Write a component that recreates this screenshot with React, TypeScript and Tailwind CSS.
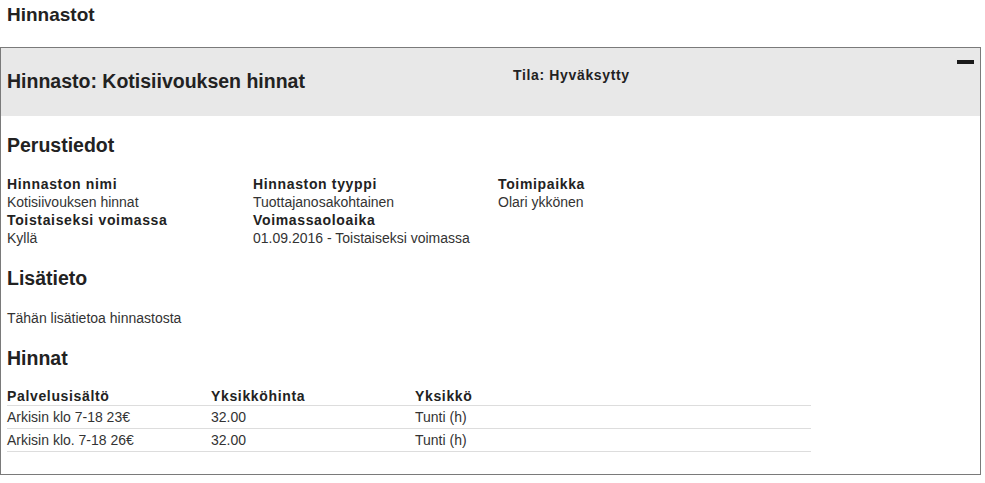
export default function App() {
  const font = { fontFamily: '"Liberation Sans", Arial, sans-serif' };
  const fields = [
    ["Hinnaston nimi", "Kotisiivouksen hinnat"],
    ["Hinnaston tyyppi", "Tuottajanosakohtainen"],
    ["Toimipaikka", "Olari ykkönen"],
    ["Toistaiseksi voimassa", "Kyllä"],
    ["Voimassaoloaika", "01.09.2016 - Toistaiseksi voimassa"],
  ];
  const rows = [
    ["Arkisin klo 7-18 23€", "32.00", "Tunti (h)"],
    ["Arkisin klo. 7-18 26€", "32.00", "Tunti (h)"],
  ];
  return (
    <div style={font} className="w-[985px] h-[483px] bg-white text-[#222] overflow-hidden">
      <h1 className="px-[7px] h-[30px] leading-[30px] text-[19px] font-bold">Hinnastot</h1>
      <div className="mt-[17px] w-[981px] h-[428px] border border-[#7a7a7a]">
        <div className="relative h-[68px] bg-[#e8e8e8] flex">
          <h2 className="pl-[6px] pt-[19px] w-[512px] text-[19.5px] leading-[28px] font-bold">
            Hinnasto: Kotisiivouksen hinnat
          </h2>
          <div className="pt-[18px] text-[14px] leading-[18px] font-bold tracking-[0.65px]">Tila: Hyväksytty</div>
          <div className="absolute left-[956px] top-[12px] w-[17px] h-[4px] bg-[#1a1a1a]" />
        </div>
        <div className="px-[6px]">
          <h3 className="mt-[15px] text-[19.5px] leading-[28px] font-bold">Perustiedot</h3>
          <div className="mt-[16px] grid grid-cols-[246px_245px_245px] text-[14px] leading-[18px]">
            {fields.map(([l, v]) => (
              <div key={l}>
                <div className="font-bold tracking-[0.65px]">{l}</div>
                <div className="text-[#333]">{v}</div>
              </div>
            ))}
          </div>
          <h3 className="mt-[17px] text-[19.5px] leading-[28px] font-bold">Lisätieto</h3>
          <p className="mt-[17px] text-[14px] leading-[18px] text-[#333]">Tähän lisätietoa hinnastosta</p>
          <h3 className="mt-[17px] text-[19.5px] leading-[28px] font-bold">Hinnat</h3>
          <div className="mt-[15px] w-[804px] text-[14px] leading-[18px]">
            <div className="grid grid-cols-[204px_204px_1fr] border-b border-[#dddddd] font-bold tracking-[0.65px]">
              <div>Palvelusisältö</div>
              <div>Yksikköhinta</div>
              <div>Yksikkö</div>
            </div>
            {rows.map((r) => (
              <div key={r[0]} className="grid grid-cols-[204px_204px_1fr] border-b border-[#dddddd] py-[2px] text-[#333]">
                {r.map((c, i) => (
                  <div key={i}>{c}</div>
                ))}
              </div>
            ))}
          </div>
        </div>
      </div>
    </div>
  );
}
